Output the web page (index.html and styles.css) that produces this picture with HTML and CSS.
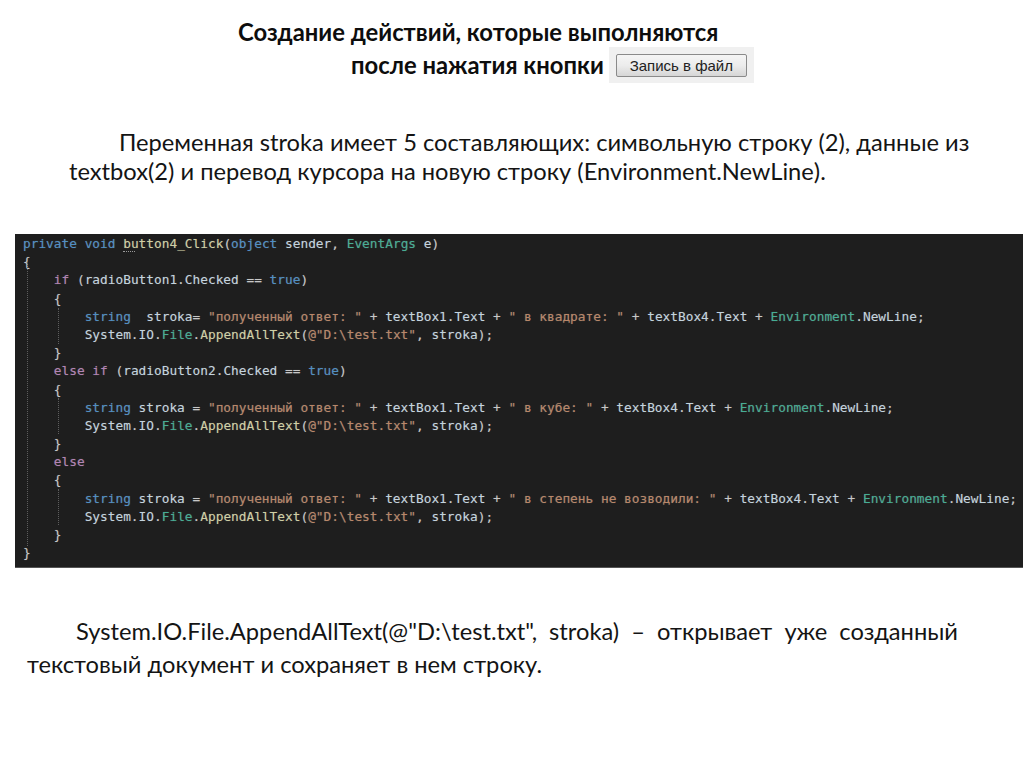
FILE: index.html
```html
<!DOCTYPE html>
<html lang="ru">
<head>
<meta charset="utf-8">
<title>Создание действий</title>
<link rel="stylesheet" href="styles.css">
</head>
<body>
<main class="slide">
  <header class="title">
    <div class="title-line title-first">Создание действий, которые выполняются</div>
    <div class="title-line title-second">
      <span>после нажатия кнопки</span>
      <span class="shot"><span class="shot-btn">Запись в файл</span></span>
    </div>
  </header>
  <p class="para para-one">Переменная stroka имеет 5 составляющих: символьную строку (2), данные из textbox(2) и перевод курсора на новую строку (Environment.NewLine).</p>
  <div class="code">
    <i class="guide guide-outer"></i>
    <i class="guide guide-a"></i>
    <i class="guide guide-b"></i>
    <i class="guide guide-c"></i>
    <i class="squiggle"></i>
    <div class="ln"><span class="kw">private</span> <span class="kw">void</span> <span class="fn">button4_Click</span>(<span class="kw">object</span> <span class="var">sender</span>, <span class="ty">EventArgs</span> <span class="var">e</span>)</div>
    <div class="ln">{</div>
    <div class="ln in1"><span class="ctl">if</span> (<span class="var">radioButton1</span>.<span class="var">Checked</span> == <span class="kw">true</span>)</div>
    <div class="ln in1">{</div>
    <div class="ln in2"><span class="kw">string</span>  <span class="var">stroka</span>= <span class="str">"полученный ответ: "</span> + <span class="var">textBox1</span>.<span class="var">Text</span> + <span class="str">" в квадрате: "</span> + <span class="var">textBox4</span>.<span class="var">Text</span> + <span class="ty">Environment</span>.<span class="var">NewLine</span>;</div>
    <div class="ln in2"><span class="var">System</span>.<span class="var">IO</span>.<span class="ty">File</span>.<span class="fn">AppendAllText</span>(<span class="str">@"D:\test.txt"</span>, <span class="var">stroka</span>);</div>
    <div class="ln in1">}</div>
    <div class="ln in1"><span class="ctl">else</span> <span class="ctl">if</span> (<span class="var">radioButton2</span>.<span class="var">Checked</span> == <span class="kw">true</span>)</div>
    <div class="ln in1">{</div>
    <div class="ln in2"><span class="kw">string</span> <span class="var">stroka</span> = <span class="str">"полученный ответ: "</span> + <span class="var">textBox1</span>.<span class="var">Text</span> + <span class="str">" в кубе: "</span> + <span class="var">textBox4</span>.<span class="var">Text</span> + <span class="ty">Environment</span>.<span class="var">NewLine</span>;</div>
    <div class="ln in2"><span class="var">System</span>.<span class="var">IO</span>.<span class="ty">File</span>.<span class="fn">AppendAllText</span>(<span class="str">@"D:\test.txt"</span>, <span class="var">stroka</span>);</div>
    <div class="ln in1">}</div>
    <div class="ln in1"><span class="ctl">else</span></div>
    <div class="ln in1">{</div>
    <div class="ln in2"><span class="kw">string</span> <span class="var">stroka</span> = <span class="str">"полученный ответ: "</span> + <span class="var">textBox1</span>.<span class="var">Text</span> + <span class="str">" в степень не возводили: "</span> + <span class="var">textBox4</span>.<span class="var">Text</span> + <span class="ty">Environment</span>.<span class="var">NewLine</span>;</div>
    <div class="ln in2"><span class="var">System</span>.<span class="var">IO</span>.<span class="ty">File</span>.<span class="fn">AppendAllText</span>(<span class="str">@"D:\test.txt"</span>, <span class="var">stroka</span>);</div>
    <div class="ln in1">}</div>
    <div class="ln">}</div>
  </div>
  <p class="para para-two">System.IO.File.AppendAllText(@"D:\test.txt", stroka) – открывает уже созданный текстовый документ и сохраняет в нем строку.</p>
</main>
</body>
</html>
```
FILE: styles.css
```css
* { box-sizing: border-box; }
html, body { margin: 0; padding: 0; background: #fff; }
body { width: 1024px; height: 767px; overflow: hidden; }
.slide {
  display: flex;
  flex-direction: column;
  padding-top: 18px;
  font-family: "Lato", "Open Sans", "Noto Sans", sans-serif;
  color: #0d0d0d;
}
.title { font-weight: 700; font-size: 23.8px; }
.title-line { display: flex; align-items: center; white-space: nowrap; }
.title-first { padding-left: 238px; height: 28px; }
.title-second { padding-left: 351px; height: 36px; margin-top: 1px; gap: 5px; }
.shot {
  display: flex;
  align-items: center;
  justify-content: center;
  width: 145px;
  height: 36px;
  background: #f0f0f0;
}
.shot-btn {
  width: 131px;
  height: 23px;
  border: 1px solid #8a8a8a;
  border-radius: 2px;
  background: linear-gradient(#f5f5f5 0%, #ececec 50%, #d6d6d6 100%);
  font: 400 15px/21px "Liberation Sans", Arial, sans-serif;
  color: #222;
  text-align: center;
}
.para {
  margin: 0;
  font-size: 23.7px;
  color: #141414;
}
.para-one { margin: 45px 40px 0 69px; line-height: 29px; text-indent: 50px; }
.para-two { margin: 47px 66px 0 27px; line-height: 33px; text-indent: 49px; text-align: justify; }
.code {
  position: relative;
  margin: 48px 0 0 15px;
  width: 1008px;
  height: 334px;
  padding: 1px 0 0 8px;
  background: #1e1e1e;
  border-bottom: 1px solid #555;
  overflow: hidden;
  color: #c8c8c8;
  font: 400 12.8px/18.2px "DejaVu Sans Mono", monospace;
  text-shadow: 0 0 1px rgba(200, 200, 200, 0.35);
}
.ln { height: 18.2px; white-space: pre; }
.in1 { padding-left: 4ch; }
.in2 { padding-left: 8ch; }
.guide {
  position: absolute;
  width: 1px;
  border-left: 1px dotted #5e5e5e;
}
.guide-outer { left: 12px; top: 28px; height: 284px; }
.guide-a { left: 43px; top: 74px; height: 36px; }
.guide-b { left: 43px; top: 164px; height: 36px; }
.guide-c { left: 43px; top: 255px; height: 36px; }
.squiggle {
  position: absolute;
  left: 108px;
  top: 17px;
  width: 12px;
  border-top: 1px dotted #9a9a9a;
}
.kw { color: #4f8fc4; }
.ctl { color: #b283b4; }
.fn { color: #d0cfa4; }
.ty { color: #45ad94; }
.var { color: #c3d3de; }
.str { color: #b98768; }
```
